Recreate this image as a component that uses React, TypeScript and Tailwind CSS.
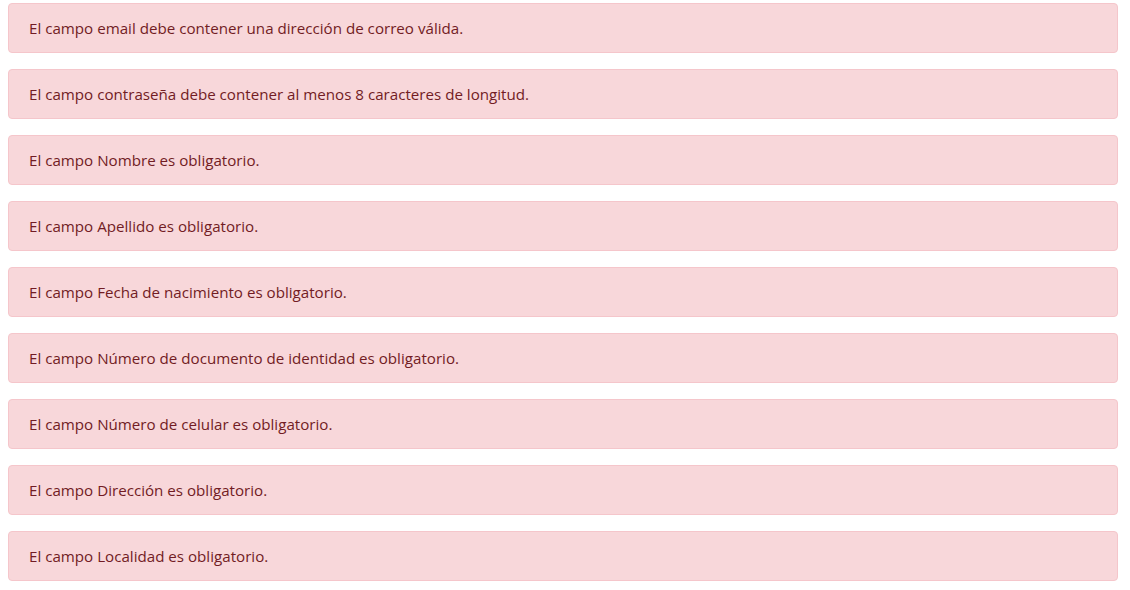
import React from "react";

const msgs = [
  "El campo email debe contener una dirección de correo válida.",
  "El campo contraseña debe contener al menos 8 caracteres de longitud.",
  "El campo Nombre es obligatorio.",
  "El campo Apellido es obligatorio.",
  "El campo Fecha de nacimiento es obligatorio.",
  "El campo Número de documento de identidad es obligatorio.",
  "El campo Número de celular es obligatorio.",
  "El campo Dirección es obligatorio.",
  "El campo Localidad es obligatorio.",
];

export default function App() {
  return (
    <div className="min-h-[590px] bg-white pt-[3px] pl-[8px]">
      <div className="flex w-[1110px] flex-col gap-4">
        {msgs.map((m, i) => (
          <div
            key={i}
            className="rounded-[4px] border border-[#f5c6cb] bg-[#f8d7da] px-5 py-3 text-[15.15px] leading-6 text-[#721c24] [font-family:'Open_Sans',sans-serif]"
          >
            {m}
          </div>
        ))}
      </div>
    </div>
  );
}
